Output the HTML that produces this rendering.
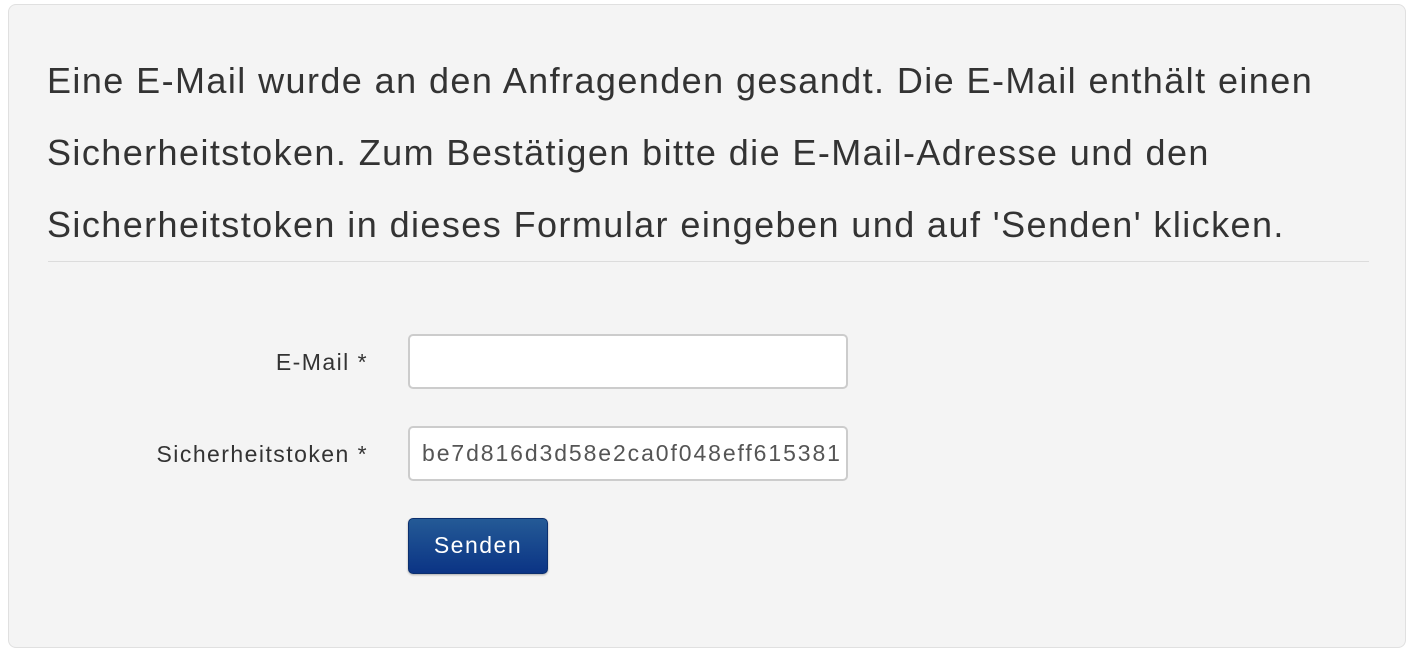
<!DOCTYPE html>
<html><head><meta charset="utf-8"><style>
body{margin:0;background:#fff;font-family:"Liberation Sans",sans-serif;width:1416px;height:658px;overflow:hidden}
.panel{position:absolute;left:8px;top:4px;width:1398px;height:644px;background:#f4f4f4;border:1px solid #e0e0e0;border-radius:8px;box-sizing:border-box}
p{position:absolute;left:38px;top:40px;margin:0;width:1360px;font-size:36px;line-height:72px;color:#333;letter-spacing:1.42px;white-space:nowrap}
.hr{position:absolute;left:39px;top:256px;width:1321px;height:1px;background:#dcdcdc}
.lbl{position:absolute;right:1037px;font-size:23px;color:#333;letter-spacing:1.45px}
.inp{position:absolute;left:399px;width:440px;height:55px;box-sizing:border-box;background:#fff;border:2px solid #ccc;border-radius:5px;font-size:23px;color:#555;padding-left:12px;line-height:51px;letter-spacing:1.9px;white-space:nowrap;overflow:hidden}
.btn{position:absolute;left:399px;top:513px;width:140px;height:56px;box-sizing:border-box;border:1px solid #0b2f6e;border-radius:5px;background:linear-gradient(#245a96,#0b3485);color:#fff;font-size:23px;text-align:center;line-height:52px;letter-spacing:1.5px;box-shadow:0 1px 2px rgba(0,0,0,.3)}
</style></head><body>
<div class="panel">
<p>Eine E-Mail wurde an den Anfragenden gesandt. Die E-Mail enthält einen<br>Sicherheitstoken. Zum Bestätigen bitte die E-Mail-Adresse und den<br>Sicherheitstoken in dieses Formular eingeben und auf 'Senden' klicken.</p>
<div class="hr"></div>
<div class="lbl" style="top:344px">E-Mail *</div>
<div class="inp" style="top:329px"></div>
<div class="lbl" style="top:436px">Sicherheitstoken *</div>
<div class="inp" style="top:421px">be7d816d3d58e2ca0f048eff615381</div>
<div class="btn">Senden</div>
</div>
</body></html>
